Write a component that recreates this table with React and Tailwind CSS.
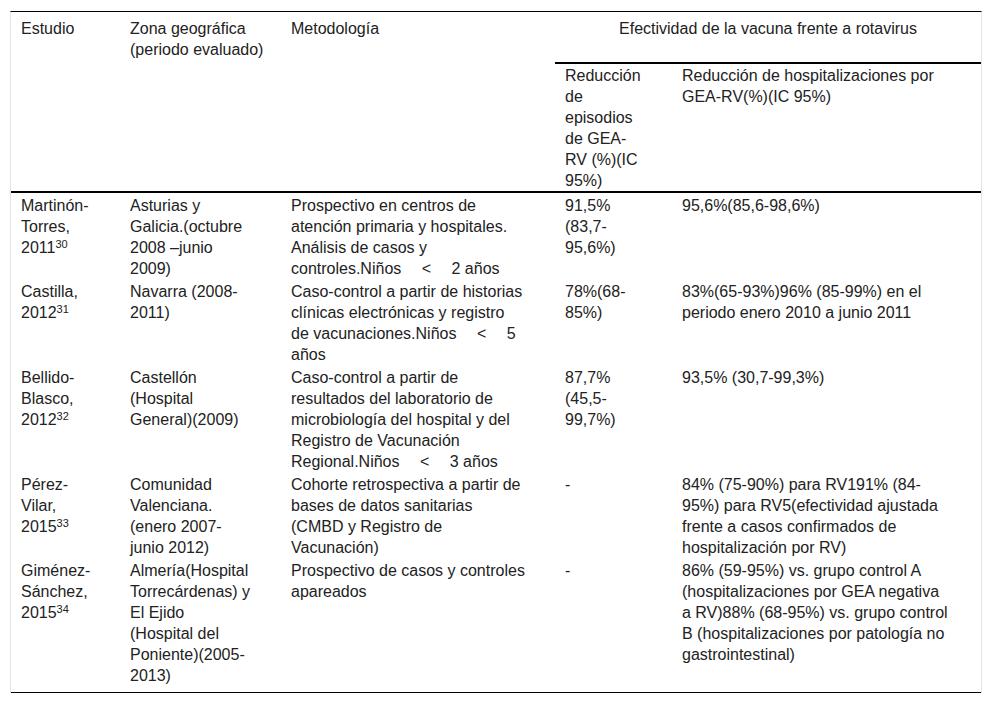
import React from "react";

const rows = [
  {
    study: ["Martinón-", "Torres,"],
    year: "2011",
    ref: "30",
    zone: ["Asturias y", "Galicia.(octubre", "2008 –junio", "2009)"],
    method: [
      "Prospectivo en centros de",
      "atención primaria y hospitales.",
      "Análisis de casos y",
      "controles.Niños \u2003<\u2003 2 años",
    ],
    episodes: ["91,5%", "(83,7-", "95,6%)"],
    hosp: ["95,6%(85,6-98,6%)"],
  },
  {
    study: ["Castilla,"],
    year: "2012",
    ref: "31",
    zone: ["Navarra (2008-", "2011)"],
    method: [
      "Caso-control a partir de historias",
      "clínicas electrónicas y registro",
      "de vacunaciones.Niños \u2003<\u2003 5",
      "años",
    ],
    episodes: ["78%(68-", "85%)"],
    hosp: ["83%(65-93%)96% (85-99%) en el", "periodo enero 2010 a junio 2011"],
  },
  {
    study: ["Bellido-", "Blasco,"],
    year: "2012",
    ref: "32",
    zone: ["Castellón", "(Hospital", "General)(2009)"],
    method: [
      "Caso-control a partir de",
      "resultados del laboratorio de",
      "microbiología del hospital y del",
      "Registro de Vacunación",
      "Regional.Niños \u2003<\u2003 3 años",
    ],
    episodes: ["87,7%", "(45,5-", "99,7%)"],
    hosp: ["93,5% (30,7-99,3%)"],
  },
  {
    study: ["Pérez-", "Vilar,"],
    year: "2015",
    ref: "33",
    zone: ["Comunidad", "Valenciana.", "(enero 2007-", "junio 2012)"],
    method: [
      "Cohorte retrospectiva a partir de",
      "bases de datos sanitarias",
      "(CMBD y Registro de",
      "Vacunación)",
    ],
    episodes: ["-"],
    hosp: [
      "84% (75-90%) para RV191% (84-",
      "95%) para RV5(efectividad ajustada",
      "frente a casos confirmados de",
      "hospitalización por RV)",
    ],
  },
  {
    study: ["Giménez-", "Sánchez,"],
    year: "2015",
    ref: "34",
    zone: [
      "Almería(Hospital",
      "Torrecárdenas) y",
      "El Ejido",
      "(Hospital del",
      "Poniente)(2005-",
      "2013)",
    ],
    method: ["Prospectivo de casos y controles", "apareados"],
    episodes: ["-"],
    hosp: [
      "86% (59-95%) vs. grupo control A",
      "(hospitalizaciones por GEA negativa",
      "a RV)88% (68-95%) vs. grupo control",
      "B (hospitalizaciones por patología no",
      "gastrointestinal)",
    ],
  },
];

function Lines({ lines }) {
  return lines.map((l, i) => (
    <div key={i} className="whitespace-pre">
      {l}
    </div>
  ));
}

export default function App() {
  return (
    <div className="bg-white w-[992px] h-[704px] pt-[11px] pl-[10px] font-['Liberation_Sans',Arial,sans-serif] text-[16px] leading-[21px] text-[#222]">
      <table className="table-fixed border-separate border-spacing-0 w-[972px] border-x border-x-[#e4e4e4] border-t border-t-black">
        <colgroup>
          <col className="w-[109px]" />
          <col className="w-[161px]" />
          <col className="w-[274px]" />
          <col className="w-[117px]" />
          <col className="w-[309px]" />
        </colgroup>
        <thead>
          <tr>
            <th rowSpan={2} className="align-top text-left font-normal pl-[10px] pt-[6px] border-b-2 border-black">
              Estudio
            </th>
            <th rowSpan={2} className="align-top text-left font-normal pl-[10px] pt-[6px] border-b-2 border-black">
              Zona geográfica
              <br />
              (periodo evaluado)
            </th>
            <th rowSpan={2} className="align-top text-left font-normal pl-[10px] pt-[6px] border-b-2 border-black">
              Metodología
            </th>
            <th colSpan={2} className="align-top text-center font-normal pt-[6px] pb-[23px] border-b-2 border-black">
              Efectividad de la vacuna frente a rotavirus
            </th>
          </tr>
          <tr>
            <th className="align-top text-left font-normal pl-[10px] pt-px border-b-2 border-black">
              <Lines lines={["Reducción", "de", "episodios", "de GEA-", "RV (%)(IC", "95%)"]} />
            </th>
            <th className="align-top text-left font-normal pl-[10px] pt-px border-b-2 border-black">
              <Lines lines={["Reducción de hospitalizaciones por", "GEA-RV(%)(IC 95%)"]} />
            </th>
          </tr>
        </thead>
        <tbody>
          {rows.map((r, i) => {
            const first = i === 0;
            const last = i === rows.length - 1;
            const cell = `align-top text-left pl-[10px] ${first ? "pt-[2px]" : "pt-px"} ${
              last ? "pb-[6px] border-b border-black" : "pb-px"
            }`;
            return (
              <tr key={i}>
                <td className={cell}>
                  <Lines lines={r.study} />
                  <div>
                    {r.year}
                    <sup className="text-[11px]">{r.ref}</sup>
                  </div>
                </td>
                <td className={cell}>
                  <Lines lines={r.zone} />
                </td>
                <td className={cell}>
                  <Lines lines={r.method} />
                </td>
                <td className={cell}>
                  <Lines lines={r.episodes} />
                </td>
                <td className={cell}>
                  <Lines lines={r.hosp} />
                </td>
              </tr>
            );
          })}
        </tbody>
      </table>
    </div>
  );
}
